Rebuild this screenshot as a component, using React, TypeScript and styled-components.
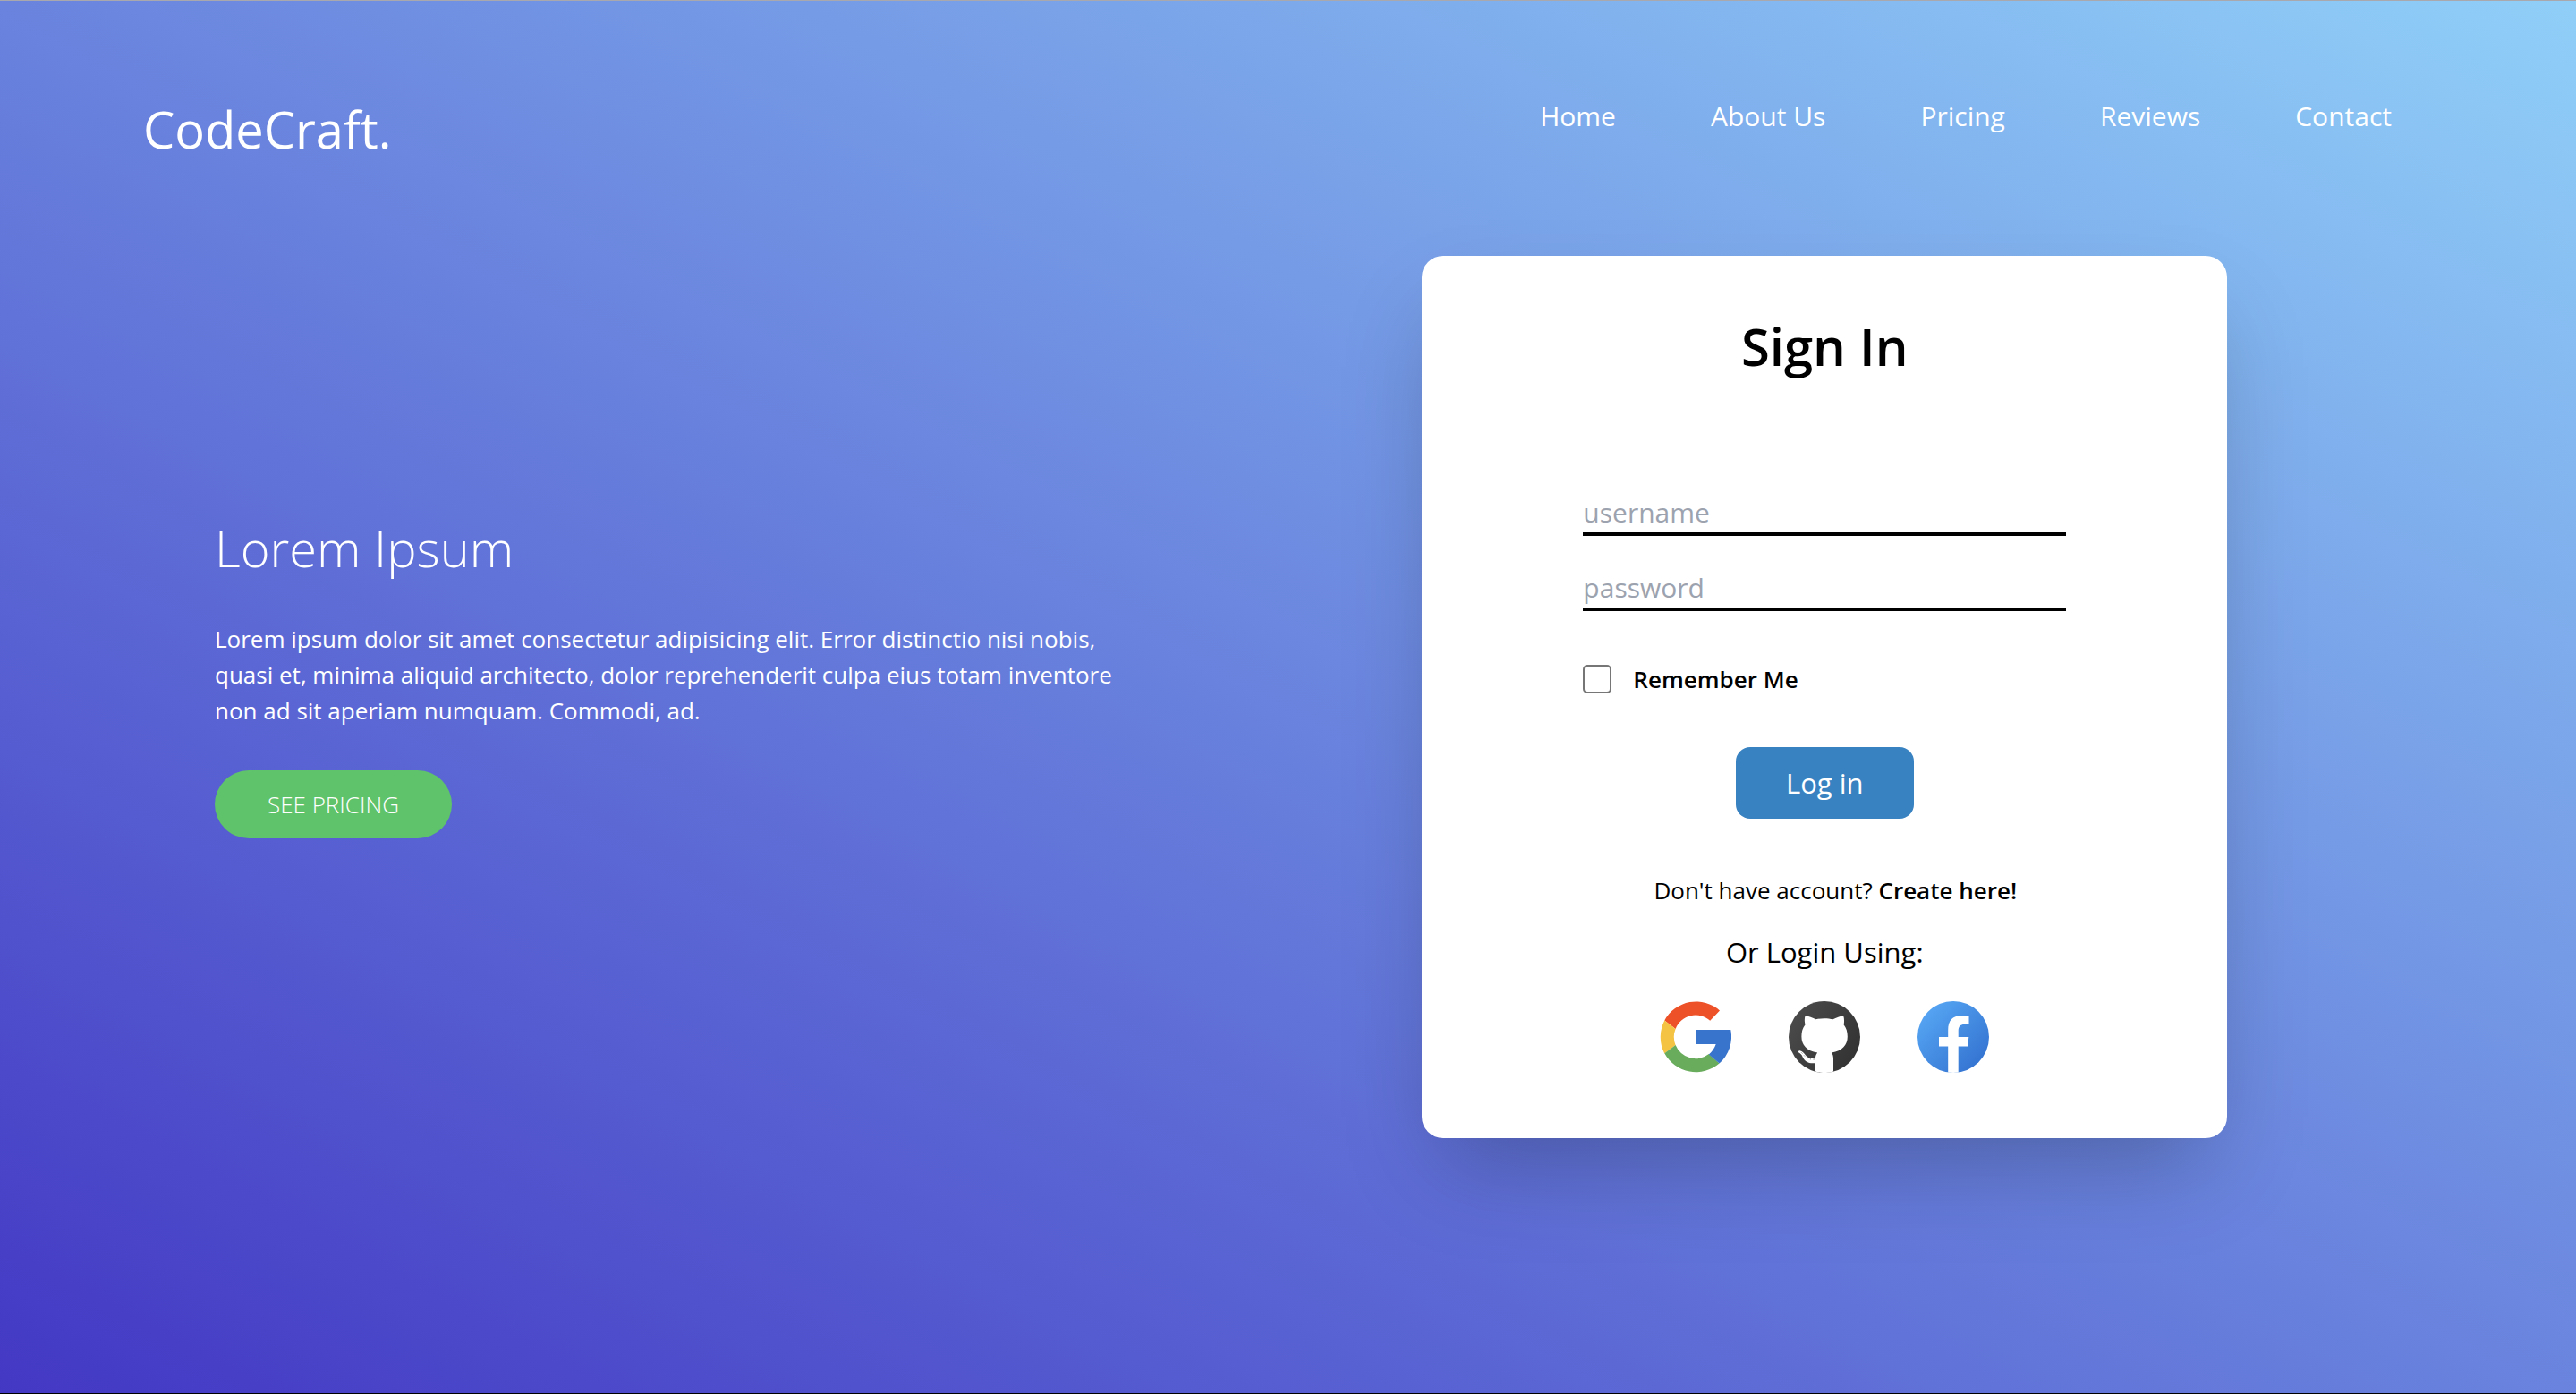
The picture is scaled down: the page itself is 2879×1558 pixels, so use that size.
import React from 'react';
import styled, { createGlobalStyle } from 'styled-components';

const GlobalStyle = createGlobalStyle`
  *, *::before, *::after { box-sizing: border-box; }
  body {
    margin: 0;
    font-family: "Segoe UI", "Open Sans", "Noto Sans", sans-serif;
    font-size: 26px;
    line-height: 40px;
    color: #000;
  }
  h1, h2, p { margin: 0; font-weight: 400; }
  a { color: inherit; text-decoration: none; }
`;

const Page = styled.div`
  min-height: 100vh;
  border-top: 1px solid #a9a9ad;
  border-bottom: 1px solid #000;
  background: linear-gradient(to top right, #4338c4, #90cff8);
`;

const Header = styled.header`
  display: flex;
  justify-content: space-between;
  align-items: flex-start;
  padding: 104px 206px 0 160px;
  color: #fff;
`;

const Logo = styled.a`
  font-size: 56px;
  line-height: 78px;
`;

const Nav = styled.nav`
  display: flex;
  gap: 106px;
  font-size: 30px;
  line-height: 50px;
`;

const Main = styled.main`
  display: grid;
  grid-template-columns: 1fr 1fr;
  align-items: center;
  padding: 103px 240px 0;
`;

const Intro = styled.section`
  display: flex;
  flex-direction: column;
  align-items: flex-start;
  max-width: 1040px;
  margin-bottom: 48px;
  color: #fff;
`;

const IntroTitle = styled.h1`
  font-size: 56px;
  line-height: 78px;
  font-weight: 300;
`;

const IntroText = styled.p`
  margin: 43px 0 47px;
`;

const PricingButton = styled.button`
  height: 76px;
  padding: 0 59px;
  border: 0;
  border-radius: 38px;
  background: #5fc36b;
  color: #fff;
  font: inherit;
  font-weight: 300;
  text-transform: uppercase;
`;

const Card = styled.form`
  justify-self: center;
  display: flex;
  flex-direction: column;
  align-items: center;
  width: 75%;
  padding: 65px 0 73px;
  border-radius: 24px;
  background: #fff;
  box-shadow: 0 50px 100px -24px rgba(0, 0, 0, 0.25);
`;

const CardTitle = styled.h2`
  font-size: 58px;
  line-height: 72px;
  font-weight: 600;
`;

const Fields = styled.div`
  display: flex;
  flex-direction: column;
  gap: 36px;
  width: 60%;
  margin: 128px 0 60px;
`;

const TextField = styled.input`
  width: 100%;
  height: 48px;
  padding: 0 0 2px;
  border: 0;
  border-bottom: 4px solid #000;
  border-radius: 0;
  outline: 0;
  background: transparent;
  font: inherit;
  font-size: 30px;
  &::placeholder { color: #9ca3af; opacity: 1; }
`;

const Remember = styled.label`
  display: flex;
  align-items: center;
  gap: 24px;
  width: 60%;
  line-height: 32px;
  font-weight: 600;
`;

const Checkbox = styled.input`
  appearance: none;
  width: 32px;
  height: 32px;
  margin: 0;
  border: 2px solid #767676;
  border-radius: 5px;
  background: #fff;
  &:checked { background: #3882c1; }
`;

const LoginButton = styled.button`
  height: 80px;
  margin: 60px 0;
  padding: 0 56px;
  border: 0;
  border-radius: 16px;
  background: #3882c1;
  color: #fff;
  font: inherit;
  font-size: 31px;
`;

const SignUp = styled.p`
  padding-left: 24px;
  a { font-weight: 600; }
`;

const OrText = styled.p`
  margin: 25px 0 31px;
  font-size: 31px;
  line-height: 48px;
`;

const Socials = styled.div`
  display: flex;
  gap: 64px;
`;

const SocialLink = styled.a`
  display: block;
  width: 80px;
  height: 80px;
  svg { display: block; width: 100%; height: 100%; }
`;

const GoogleIcon = () => (
  <svg viewBox="0 0 80 80" aria-hidden="true">
    <path fill="#ec5127" d="M5.3 21.5A40 40 0 0 1 67 10.5L56.2 21.8A24 24 0 0 0 17.6 31Z" />
    <path fill="#f5c344" d="M5.3 21.5A40 40 0 0 0 5.3 58.5L17.6 49A24 24 0 0 1 17.6 31Z" />
    <path fill="#69ac5c" d="M5.3 58.3A40 40 0 0 0 66.5 69.6L54.8 59A24 24 0 0 1 17.6 49Z" />
    <path fill="#3874cb" d="M40 32H79.3A40 40 0 0 1 66.5 69.6L54.8 59.4A24 24 0 0 0 62.7 48H40Z" />
  </svg>
);

const GitHubIcon = () => (
  <svg viewBox="0 0 80 80" aria-hidden="true">
    <defs>
      <linearGradient id="gh" x1="0" y1="0.2" x2="1" y2="0.8">
        <stop offset="0" stopColor="#4b4b4b" />
        <stop offset="1" stopColor="#323232" />
      </linearGradient>
    </defs>
    <circle cx="40" cy="40" r="40" fill="url(#gh)" />
    <path
      fill="#fff"
      d="M18.5 16.3C22 16.8 27 18.6 30.5 20.3C36 18.8 44 18.8 49.5 20.3C53 18.6 58 16.8 61.2 16.3C62.2 19.5 62.3 23 61.6 26.2C64.5 30 65.8 34 65.8 39.5C65.8 49 60 55.5 48 57.6C49.4 59.4 50 61.8 50 64.5V78.6Q40 81.5 30 78.6V69.2C22 70 18.2 67.5 15.5 62C14.4 59.7 13.2 58.4 11.4 57.6C10.4 56.8 10.9 55.2 12.6 55.3C15.5 55.7 17.2 58.2 19 60.5C21.6 63.8 25.5 64.2 30 63C30.2 60.8 30.9 59 32.2 57.6C20.2 55.5 14.4 49 14.4 39.5C14.4 34 15.6 30 18.5 26.2C17.6 23 17.6 19.5 18.5 16.3Z"
    />
    <path fill="none" stroke="#555" strokeWidth="1" strokeDasharray="1 3" d="M14.5 57.6C18.5 61.5 20 66 30 64.8" />
  </svg>
);

const FacebookIcon = () => (
  <svg viewBox="0 0 80 80" aria-hidden="true">
    <defs>
      <linearGradient id="fb" x1="0.1" y1="0.15" x2="0.85" y2="0.9">
        <stop offset="0" stopColor="#55a4f2" />
        <stop offset="1" stopColor="#3474d2" />
      </linearGradient>
    </defs>
    <circle cx="40" cy="40" r="40" fill="url(#fb)" />
    <path
      fill="#fff"
      d="M34.2 79.6V50.5H24V40H34.2V32.5C34.2 21.5 39 16.3 49 16.3C52.5 16.3 55.5 16.3 57.5 16.8V26H52.5C47.5 26 45.7 28.4 45.7 33.5V40H57.3L56 50.5H45.7V79.6Q40 80.4 34.2 79.6Z"
    />
  </svg>
);

const links = ['Home', 'About Us', 'Pricing', 'Reviews', 'Contact'];

export default function App() {
  return (
    <>
      <GlobalStyle />
      <Page>
        <Header>
          <Logo href="#home">CodeCraft.</Logo>
          <Nav>
            {links.map((label) => (
              <a key={label} href={`#${label.toLowerCase().replace(' ', '-')}`}>{label}</a>
            ))}
          </Nav>
        </Header>
        <Main>
          <Intro>
            <IntroTitle>Lorem Ipsum</IntroTitle>
            <IntroText>
              Lorem ipsum dolor sit amet consectetur adipisicing elit. Error distinctio nisi nobis,
              quasi et, minima aliquid architecto, dolor reprehenderit culpa eius totam inventore
              non ad sit aperiam numquam. Commodi, ad.
            </IntroText>
            <PricingButton type="button">See Pricing</PricingButton>
          </Intro>
          <Card onSubmit={(e) => e.preventDefault()}>
            <CardTitle>Sign In</CardTitle>
            <Fields>
              <TextField type="text" name="username" placeholder="username" aria-label="username" />
              <TextField type="password" name="password" placeholder="password" aria-label="password" />
            </Fields>
            <Remember>
              <Checkbox type="checkbox" name="remember" />
              Remember Me
            </Remember>
            <LoginButton type="submit">Log in</LoginButton>
            <SignUp>
              Don't have account? <a href="#create">Create here!</a>
            </SignUp>
            <OrText>Or Login Using:</OrText>
            <Socials>
              <SocialLink href="#google" aria-label="Google"><GoogleIcon /></SocialLink>
              <SocialLink href="#github" aria-label="GitHub"><GitHubIcon /></SocialLink>
              <SocialLink href="#facebook" aria-label="Facebook"><FacebookIcon /></SocialLink>
            </Socials>
          </Card>
        </Main>
      </Page>
    </>
  );
}
